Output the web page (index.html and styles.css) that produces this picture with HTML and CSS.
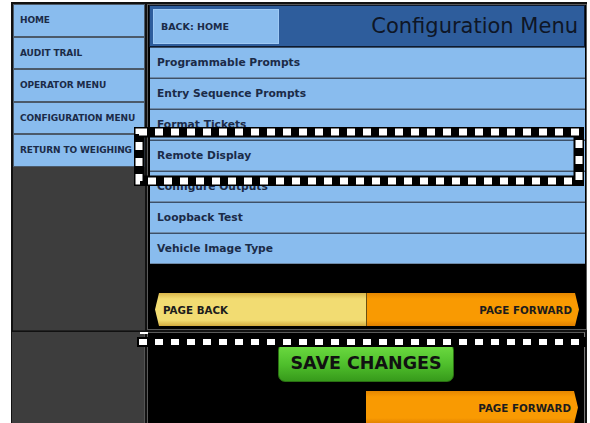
FILE: index.html
```html
<!DOCTYPE html>
<html lang="en">

<head>
  <meta charset="UTF-8" />
  <title>Configuration Menu</title>
  <link rel="stylesheet" href="styles.css">
</head>

<body>
  <div class="screen">
    <div class="top">
      <nav class="sidebar">
        <div class="side-item">HOME</div>
        <div class="side-item">AUDIT TRAIL</div>
        <div class="side-item">OPERATOR MENU</div>
        <div class="side-item">CONFIGURATION MENU</div>
        <div class="side-item">RETURN TO WEIGHING</div>
      </nav>

      <div class="main">
        <div class="header">
          <div class="back">BACK: HOME</div>
          <h1>Configuration Menu</h1>
        </div>

        <div class="rows">
          <div class="row">Programmable Prompts</div>
          <div class="row">Entry Sequence Prompts</div>
          <div class="row">Format Tickets</div>
          <div class="row">Remote Display</div>
          <div class="row">Configure Outputs</div>
          <div class="row">Loopback Test</div>
          <div class="row">Vehicle Image Type</div>
        </div>

        <div class="pager">
          <div class="btn-back">PAGE BACK</div>
          <div class="btn-forward">PAGE FORWARD</div>
        </div>
      </div>
    </div>

    <div class="bottom">
      <div class="side-blank"></div>
      <div class="main-lower">
        <div class="save">SAVE CHANGES</div>
        <div class="lower-pager">
          <div class="btn-forward">PAGE FORWARD</div>
        </div>
      </div>
    </div>

    <!-- callout marks drawn over the screenshot -->
    <svg class="callout" width="450" height="59" viewBox="0 0 450 59">
      <rect x="5" y="5" width="440" height="49" fill="none" stroke="#000" stroke-width="11" />
      <rect x="5" y="5" width="440" height="49" fill="none" stroke="#fff" stroke-width="7" stroke-dasharray="8 8" />
    </svg>
    <div class="dash-line"></div>
  </div>
</body>

</html>
```

FILE: styles.css
```css
body {
  margin: 0;
  background-color: white;
  font-family: "DejaVu Sans", Verdana, sans-serif;
  color: #1b2b48;
}

.screen {
  position: relative;
  width: 574px;
  height: 430px;
  margin: 2px 0 0 11px;
  padding: 2px 0 0 2px;
  background-color: #111;
  overflow: hidden;
}

.top,
.bottom {
  display: grid;
  grid-template-columns: 132px 440px;
  column-gap: 2px;
}

/* left navigation */
.sidebar {
  background-color: #3d3d3d;
  height: 326px;
  border-bottom: 1px solid #222;
}

.side-item {
  box-sizing: border-box;
  height: 32.5px;
  display: flex;
  align-items: center;
  padding-left: 6px;
  background-color: #89bcee;
  border: 1px solid #4b5a6a;
  font-size: 9px;
  font-weight: bold;
  letter-spacing: -0.1px;
  white-space: nowrap;
  overflow: hidden;
}

/* right panel */
.main {
  border: 1px solid #5a5a5a;
  background-color: black;
  height: 324px;
  display: flex;
  flex-direction: column;
}

.header {
  display: flex;
  align-items: center;
  justify-content: space-between;
  height: 40px;
  margin: 0 1px;
  background-color: #2e5d9c;
  border: 1px solid #0c1a30;
  padding: 0 6px 0 3px;
}

.back {
  box-sizing: border-box;
  width: 126px;
  height: 35px;
  display: flex;
  align-items: center;
  padding-left: 7px;
  background-color: #89bcee;
  border: 1px solid #9fcaf5;
  font-size: 9.5px;
  font-weight: bold;
}

.header h1 {
  margin: 0;
  font-size: 21px;
  font-weight: normal;
  color: #0e1626;
}

.rows {
  padding: 0 1px 0 2px;
}

.row {
  box-sizing: border-box;
  height: 31px;
  display: flex;
  align-items: center;
  padding-left: 7px;
  background-color: #89bcee;
  border-top: 1px solid #3c5068;
  border-bottom: 1px solid #6e8aa8;
  font-size: 10.7px;
  font-weight: bold;
}

.pager,
.lower-pager {
  display: flex;
  padding: 0 7px;
}

.pager {
  margin-top: 29px;
}

.btn-back,
.btn-forward {
  box-sizing: border-box;
  width: 212px;
  height: 33px;
  display: flex;
  align-items: center;
  font-size: 10.3px;
  font-weight: bold;
  color: #1c1c1c;
}

.btn-back {
  padding-left: 8px;
  background: linear-gradient(#d9b64a, #f2dc72 18%, #f2dc72 82%, #d2ab3e);
  clip-path: polygon(4px 0, 100% 0, 100% 100%, 4px 100%, 0 50%);
  border-right: 1px solid #6b5010;
}

.btn-forward {
  justify-content: flex-end;
  padding-right: 7px;
  background: linear-gradient(#e58700, #f99a02 18%, #f99a02 82%, #df7f00);
  clip-path: polygon(0 0, calc(100% - 4px) 0, 100% 50%, calc(100% - 4px) 100%, 0 100%);
}

/* lower part */
.bottom {
  margin-top: 1px;
}

.side-blank {
  background-color: #3d3d3d;
  border-right: 1px solid #555;
  margin-left: -1px;
  height: 120px;
}

.main-lower {
  border: 1px solid #5a5a5a;
  border-right-color: #777;
  background-color: black;
  height: 120px;
  margin-right: 2px;
  display: flex;
  flex-direction: column;
  align-items: center;
}

.save {
  box-sizing: border-box;
  width: 176px;
  height: 39px;
  margin-top: 10px;
  display: flex;
  align-items: center;
  justify-content: center;
  background: linear-gradient(#6edc42, #4fbf2c 55%, #379a1b);
  border: 1px solid #2a6f12;
  border-radius: 7px;
  font-size: 17.5px;
  font-weight: bold;
  color: #111;
}

.lower-pager {
  align-self: stretch;
  justify-content: flex-end;
  margin-top: 9px;
  padding-right: 6px;
}

/* callouts */
.callout {
  position: absolute;
  left: 123px;
  top: 125px;
}

.dash-line {
  position: absolute;
  left: 126px;
  top: 335px;
  width: 445px;
  height: 6px;
  border: 2px solid black;
  background: repeating-linear-gradient(90deg, #fff 0 8px, #000 8px 16px);
}

.dash-line::before {
  content: "";
  position: absolute;
  left: 1px;
  top: -7px;
  width: 8px;
  height: 2px;
  background-color: white;
}
```
